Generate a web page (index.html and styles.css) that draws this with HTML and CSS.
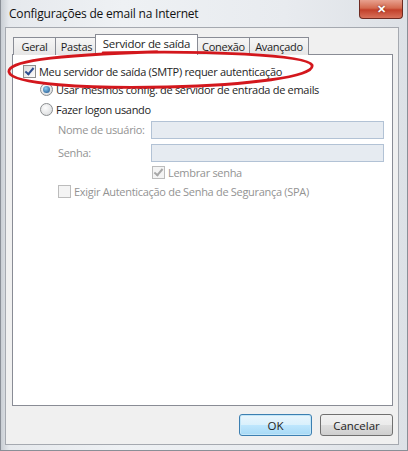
FILE: index.html
```html
<!DOCTYPE html>
<html lang="pt">
<head>
    <meta charset="UTF-8">
    <title>Configurações de email na Internet</title>
    <link rel="stylesheet" href="styles.css">
</head>
<body>
    <div class="window">
        <div class="titlebar">
            <span class="title">Configurações de email na Internet</span>
            <button class="close-btn" aria-label="Fechar">&#x2715;</button>
        </div>
        <div class="client">
            <!-- Tabs -->
            <div class="tabs">
                <div class="tab tab-geral">Geral</div>
                <div class="tab tab-pastas">Pastas</div>
                <div class="tab active">Servidor de saída</div>
                <div class="tab tab-conexao">Conexão</div>
                <div class="tab tab-avancado">Avançado</div>
            </div>
            <div class="panel">
                <label class="row first">
                    <span class="check checked"></span>
                    Meu servidor de saída (SMTP) requer autenticação
                </label>
                <div class="indent">
                    <label class="row">
                        <span class="radio selected"></span>
                        Usar mesmos config. de servidor de entrada de emails
                    </label>
                    <label class="row second-radio">
                        <span class="radio"></span>
                        Fazer logon usando
                    </label>
                    <div class="fields disabled">
                        <div class="field">
                            <span class="field-label">Nome de usuário:</span>
                            <span class="textbox"></span>
                        </div>
                        <div class="field">
                            <span class="field-label">Senha:</span>
                            <span class="textbox"></span>
                        </div>
                        <label class="row remember">
                            <span class="check checked dim"></span>
                            Lembrar senha
                        </label>
                        <label class="row spa">
                            <span class="check dim"></span>
                            Exigir Autenticação de Senha de Segurança (SPA)
                        </label>
                    </div>
                </div>
                <!-- hand drawn annotation -->
                <svg class="circle-mark" width="312" height="42" viewBox="0 0 312 42">
                    <path d="M 96 3 C 200 0, 300 5, 305 15 C 309 27, 240 35, 160 37 C 80 39, 4 34, 2 22 C 0 12, 40 5, 150 2"
                          fill="none" stroke="#d3171d" stroke-width="2.8" stroke-linecap="round"/>
                </svg>
            </div>
            <div class="buttons">
                <button class="btn default">OK</button>
                <button class="btn">Cancelar</button>
            </div>
        </div>
    </div>
</body>
</html>
```

FILE: styles.css
```css
/* Variables */
:root {
    --client-color: #f0f0f0;
    --border-color: #898c95;
    --text-color: #1e1e1e;
    --disabled-text: #939393;
}

body {
    margin: 0;
    width: 408px;
    height: 451px;
    font-family: "Open Sans", "Noto Sans", sans-serif;
    font-size: 11px;
    letter-spacing: -0.3px;
    color: var(--text-color);
    overflow: hidden;
}

.window {
    width: 408px;
    height: 451px;
    box-sizing: border-box;
    background: linear-gradient(90deg, #c9ced4 0%, #e6e9ed 2%, #eef1f4 30%, #e8ebef 70%, #dde1e6 100%);
    border: 1px solid #8a8f97;
    border-top: none;
    padding: 0 8px 5px 4px;
    display: flex;
    flex-direction: column;
}

/* Title bar */
.titlebar {
    height: 27px;
    display: flex;
    align-items: flex-start;
    justify-content: space-between;
}

.title {
    margin-top: 5px;
    margin-left: 4px;
    font-size: 12px;
    letter-spacing: -0.2px;
    color: #111;
}

.close-btn {
    width: 44px;
    height: 19px;
    margin-right: -4px;
    border: 1px solid #6e2a21;
    border-top: none;
    border-radius: 0 0 4px 4px;
    background: linear-gradient(#e8a18f 0%, #d46a4f 45%, #c2402a 55%, #d8715a 100%);
    color: #fff;
    font-size: 11px;
    font-weight: bold;
    padding: 0;
    text-shadow: 0 0 2px #6a1a10;
}

/* Client area */
.client {
    flex: 1;
    background: var(--client-color);
    border: 1px solid #a5a9b0;
    padding: 6px 5px 8px 6px;
    display: flex;
    flex-direction: column;
}

.tabs {
    display: flex;
    align-items: flex-end;
    height: 21px;
    margin-bottom: -1px;
    padding-left: 1px;
    position: relative;
    z-index: 1;
}

.tab {
    height: 18px;
    box-sizing: border-box;
    border: 1px solid var(--border-color);
    border-bottom: none;
    margin-right: -1px;
    background: linear-gradient(#f6f6f6, #e6e6e6);
    line-height: 18px;
    text-align: center;
}

.tab-geral { width: 43px; }
.tab-pastas { width: 43px; }
.tab-conexao { width: 53px; }
.tab-avancado { width: 60px; }

.tab.active {
    width: 103px;
    height: 21px;
    background: #fff;
    margin: 0 -1px 0 -2px;
    line-height: 17px;
    font-size: 11.5px;
}

.panel {
    position: relative;
    height: 352px;
    background: #fff;
    border: 1px solid var(--border-color);
    padding: 8px 0 0 10px;
    box-sizing: border-box;
}

.row {
    display: flex;
    align-items: center;
    height: 18px;
    gap: 3px;
}

.row.first {
    height: 17px;
}

.indent {
    padding-left: 17px;
}

.second-radio {
    margin-top: 2px;
}

.check {
    width: 11px;
    height: 11px;
    border: 1px solid #8e8f8f;
    background: linear-gradient(135deg, #dcdcdc, #fdfdfd);
    position: relative;
}

.check.checked::after {
    content: "";
    position: absolute;
    left: 3px;
    top: 0;
    width: 3px;
    height: 7px;
    border: solid #2c4d8f;
    border-width: 0 2px 2px 0;
    transform: rotate(40deg);
}

.check.dim {
    border-color: #bcbcbc;
    background: #f4f4f4;
}

.check.dim.checked::after {
    border-color: #a8a8a8;
}

.radio {
    width: 11px;
    height: 11px;
    border-radius: 50%;
    border: 1px solid #8a8d90;
    background: radial-gradient(circle at 40% 35%, #fdfdfd, #d4d6d8);
    position: relative;
}

.radio.selected::after {
    content: "";
    position: absolute;
    left: 2px;
    top: 2px;
    width: 7px;
    height: 7px;
    border-radius: 50%;
    background: radial-gradient(circle at 40% 35%, #8cd0f5, #1a4c86);
}

.fields {
    padding-left: 18px;
}

.disabled {
    color: var(--disabled-text);
}

.field {
    display: flex;
    align-items: center;
    height: 23px;
}

.field-label {
    width: 93px;
    white-space: nowrap;
}

.textbox {
    width: 231px;
    height: 16px;
    border: 1px solid #b2c2d5;
    background: #e6ebf1;
}

.remember {
    padding-left: 94px;
    height: 16px;
}

.spa {
    height: 22px;
}

.circle-mark {
    position: absolute;
    left: -6px;
    top: -5px;
    z-index: 2;
}

/* Dialog buttons */
.buttons {
    display: flex;
    justify-content: flex-end;
    gap: 8px;
    margin-top: 8px;
}

.btn {
    width: 73px;
    height: 22px;
    border: 1px solid #707070;
    border-radius: 3px;
    background: linear-gradient(#f2f2f2 0%, #ebebeb 50%, #dddddd 51%, #cfcfcf 100%);
    font-family: inherit;
    font-size: 11.5px;
    color: #1e1e1e;
    padding: 0;
}

.btn.default {
    border-color: #3c7fb1;
    background: linear-gradient(#eaf6fd 0%, #d9f0fc 50%, #bee6fd 51%, #a7d9f5 100%);
    box-shadow: inset 0 0 0 1px #c3e6f8;
}
```
